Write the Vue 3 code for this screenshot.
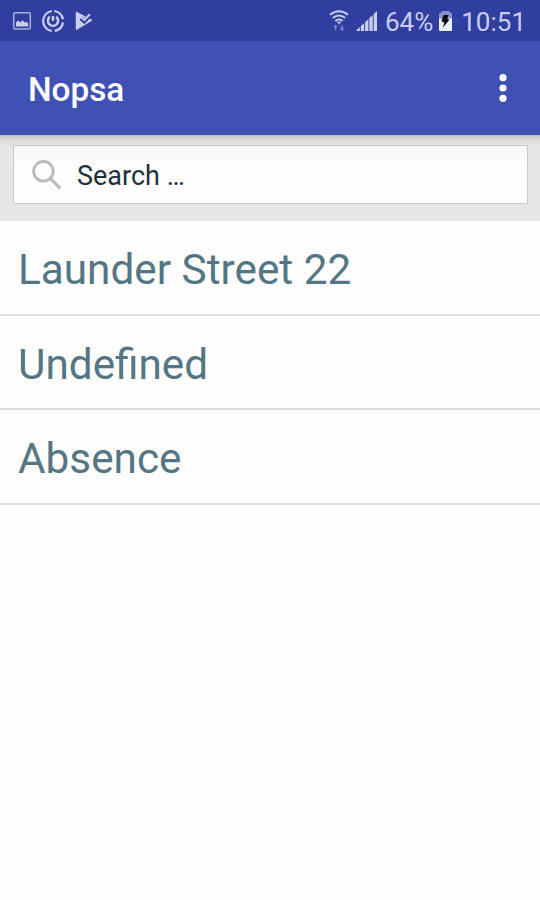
<template>
  <div class="screen">
    <!-- status bar -->
    <div class="status-bar">
      <div class="status-left">
        <svg class="icon-picture" width="20" height="20" viewBox="0 0 20 20">
          <rect x="1.7" y="1.7" width="16.6" height="16.2" rx="1.5" fill="none" stroke="currentColor" stroke-width="1.5" opacity=".8" />
          <path d="M4 15.5v-4l2.3-1.9 2.2 1.8 2-2.2 2.5 2.4 1.4-.9 1.8 1.7v3.1z" fill="currentColor" />
        </svg>
        <svg class="icon-power" width="24" height="24" viewBox="0 0 24 24" fill="none" stroke="currentColor">
          <path d="M13.2 2a10.1 10.1 0 0 1 8.7 8.2M22 13.5a10.1 10.1 0 0 1-8.2 8.400M10.800 22a10.100 10.100 0 0 1 0-20" stroke-width="2.200" />
          <path d="M8.800 7.800a5.100 5.100 0 1 0 6.400 0M12 7v5" stroke-width="2.400" />
        </svg>
        <svg class="icon-play" width="18" height="20" viewBox="0 0 18 20">
          <path d="M.8 1.700Q.8.500 2 1l14.500 7.500q1.300.7 0 1.500L2 18.800q-1.200.5-1.200-.8z" fill="currentColor" />
          <path d="M6 7.200l3.200 3L16.800 2" fill="none" stroke="#303f9f" stroke-width="4.400" />
          <path d="M6.300 6.200l3 2.800 5.700-5.900" fill="none" stroke="currentColor" stroke-width="2" />
        </svg>
      </div>
      <div class="status-right">
        <svg class="icon-wifi" width="20" height="22" viewBox="0 0 20 22" fill="none" stroke="currentColor">
          <path d="M1 4.700q9-7 18 0M3.800 8q6.200-5 12.400 0M6.400 11q3.600-3 7.200 0" stroke-width="2" />
          <path d="M7.800 11.700h4.400L10 14.500z" fill="currentColor" stroke="none" />
          <path d="M6.500 20.500v-5M5 17.200l1.500-1.800L8 17.200M13 15.200v5M11.500 18.500l1.500 1.800 1.500-1.800" stroke-width="1.300" opacity=".5" />
        </svg>
        <svg class="icon-signal" width="22" height="22" viewBox="0 0 22 22" fill="currentColor">
          <path d="M.5 21v-1l3.300-3V21zM4.800 21v-5l3.300-2.800V21zM9.100 21v-9l3.300-2.800V21zM13.400 21V8l3.300-2.800V21zM17.700 21V4L21 1v20z" />
        </svg>
        <span class="percent">64%</span>
        <svg class="icon-battery" width="15" height="22" viewBox="0 0 15 22">
          <path d="M1 4q0-1.500 1.500-1.500h1.200V1h7.600v1.500h1.200Q14 2.500 14 4v5H1z" fill="#8790c8" />
          <path d="M1 8.500h13V20q0 1-1 1H2q-1 0-1-1z" fill="#eceef8" />
          <path d="M5.700 5h5L9.300 8.700l2.100 1.100-6.600 8 1.500-5-2.900-1.700z" fill="#0a0a10" />
        </svg>
        <span class="clock">10:51</span>
      </div>
    </div>

    <!-- toolbar -->
    <div class="toolbar">
      <h1 class="toolbar-title">Nopsa</h1>
      <svg class="icon-more" width="10" height="30" viewBox="0 0 10 30" fill="#fff">
        <circle cx="5" cy="4.700" r="3.600" />
        <circle cx="5" cy="15" r="3.600" />
        <circle cx="5" cy="25.300" r="3.600" />
      </svg>
    </div>

    <!-- search -->
    <div class="search-panel">
      <div class="search-box">
        <svg class="icon-search" width="30" height="30" viewBox="0 0 30 30" fill="none" stroke="#bababa" stroke-width="2.800">
          <circle cx="11.400" cy="11.300" r="9.800" />
          <path d="M18 18l10.300 10.500" stroke-width="3.200" />
        </svg>
        <span class="search-text">Search …</span>
      </div>
    </div>

    <!-- list -->
    <ul class="list">
      <li v-for="item in items" :key="item" class="list-item">{{ item }}</li>
    </ul>
  </div>
</template>

<script setup>
const items = ['Launder Street 22', 'Undefined', 'Absence']
</script>

<style>
body {
  margin: 0;
  background: #fefefe;
}
</style>

<style scoped>
.screen {
  width: 540px;
  height: 900px;
  overflow: hidden;
  background: #fefefe;
  font-family: Roboto, 'Liberation Sans', sans-serif;
}

.screen svg {
  display: block;
  flex: none;
}

.status-bar {
  display: flex;
  justify-content: space-between;
  box-sizing: border-box;
  height: 41px;
  padding: 0 14px 0 12px;
  background: #303f9f;
  color: #c9cdee;
}

.status-left,
.status-right {
  display: flex;
  align-items: center;
}

.icon-power {
  margin-left: 9px;
}

.icon-play {
  margin-left: 10px;
}

.icon-signal {
  margin-left: 7px;
}

.percent,
.clock {
  height: 41px;
  font-size: 26px;
  line-height: 44px;
}

.percent {
  margin-left: 7px;
}

.icon-battery {
  margin-left: 5px;
}

.clock {
  margin-left: 8px;
}

.toolbar {
  display: flex;
  align-items: center;
  justify-content: space-between;
  box-sizing: border-box;
  height: 94px;
  padding: 0 32px 0 28px;
  background: #3f51b5;
}

.toolbar-title {
  margin: 0;
  padding-top: 4px;
  color: #fff;
  font-size: 33.300px;
  font-weight: 500;
  line-height: 40px;
}

.search-panel {
  box-sizing: border-box;
  height: 86px;
  padding: 10px 12.500px 0 13px;
  background: linear-gradient(#bdbdbd 0, #d2d2d0 3px, #e0e0de 7px, #e7e7e7 12px);
}

.search-box {
  display: flex;
  align-items: center;
  box-sizing: border-box;
  height: 59px;
  padding-left: 18px;
  border: 1px solid #c8cbcb;
  background: linear-gradient(#f6f6f6, #fdfdfd 18px);
}

.search-text {
  margin-left: 15px;
  padding-top: 2px;
  color: #1c313a;
  font-size: 27px;
  line-height: 32px;
}

.list {
  margin: 0;
  padding: 0;
  list-style: none;
}

.list-item {
  box-sizing: border-box;
  height: 94.500px;
  padding: 2px 18px 0;
  border-bottom: 2px solid #dedede;
  color: #547684;
  font-size: 42.300px;
  line-height: 94px;
}
</style>
